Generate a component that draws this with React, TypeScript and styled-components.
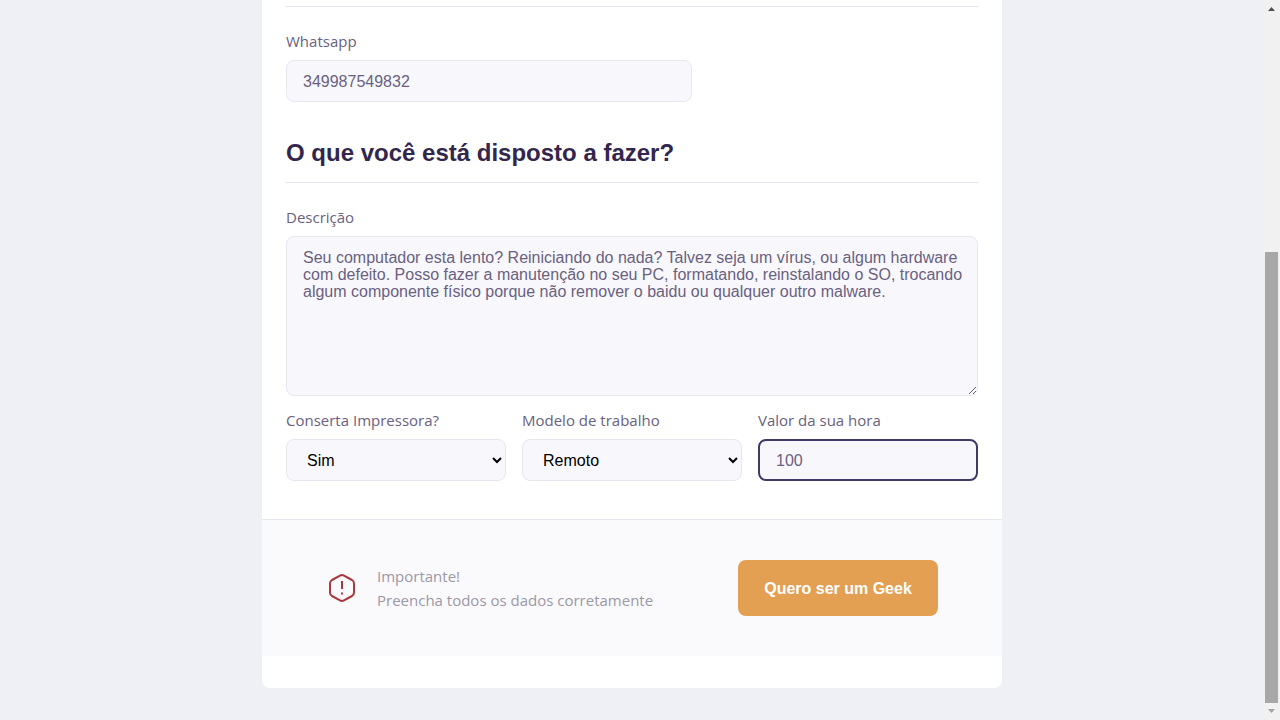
import React from 'react';
import styled, { createGlobalStyle, css } from 'styled-components';

const bodyFont = '"Open Sans", "Noto Sans", sans-serif';
const titleFont = '"Liberation Sans", Arial, sans-serif';

const GlobalStyle = createGlobalStyle`
  * { box-sizing: border-box; }
  body {
    margin: 0;
    background: #eff0f6;
    color: #6a6180;
    font-family: ${bodyFont};
  }
  input, select, textarea, button { font-family: ${titleFont}; }
`;

const Page = styled.div`
  display: flex;
  align-items: flex-start;
  min-height: 100vh;
`;

const Main = styled.main`
  flex: 1;
  min-width: 0;
  padding-bottom: 32px;
`;

const Card = styled.form`
  width: 100%;
  max-width: 740px;
  margin: 0 auto;
  padding-bottom: 32px;
  background: #ffffff;
  border-radius: 0 0 8px 8px;
`;

const Section = styled.section`
  padding: 0 24px;
`;

const SectionEdge = styled.div`
  height: 7px;
  margin-bottom: 22px;
  border-bottom: 1px solid #e6e6f0;
`;

const Title = styled.h2`
  margin: 35px 0 22px;
  padding-bottom: 13px;
  border-bottom: 1px solid #e6e6f0;
  color: #32264d;
  font: 700 24px/32px ${titleFont};
`;

const Row = styled.div<{ $columns: string; $top?: number }>`
  display: grid;
  grid-template-columns: ${({ $columns }) => $columns};
  gap: 16px;
  margin-top: ${({ $top = 0 }) => $top}px;
`;

const Field = styled.div`
  display: flex;
  flex-direction: column;
  gap: 7px;
  min-width: 0;
`;

const Label = styled.label`
  font-size: 15px;
  line-height: 24px;
`;

const control = css`
  width: 100%;
  border: 1px solid #e6e6f0;
  border-radius: 8px;
  background: #f8f8fc;
  font-size: 16px;
  outline: 0;
`;

const Input = styled.input<{ $active?: boolean }>`
  ${control}
  height: 42px;
  padding: 2px 16px 0;
  color: #6a6180;
  ${({ $active }) => $active && 'border: 2px solid #403a69;'}
`;

const TextArea = styled.textarea`
  ${control}
  display: block;
  height: 160px;
  min-height: 128px;
  padding: 12px 8px 12px 16px;
  color: #6a6180;
  line-height: 17px;
  resize: vertical;
`;

const Select = styled.select`
  ${control}
  height: 42px;
  padding: 0 0 0 16px;
  color: #000000;
`;

const Footer = styled.footer`
  display: flex;
  align-items: center;
  justify-content: space-between;
  margin-top: 38px;
  padding: 40px 64px;
  border-top: 1px solid #e6e6f0;
  background: #fafafc;
`;

const Notice = styled.p`
  display: flex;
  align-items: center;
  gap: 19px;
  margin: 0;
  color: #9c98a6;
  font-size: 15px;
  line-height: 24px;
`;

const SubmitButton = styled.button`
  width: 200px;
  height: 56px;
  padding: 2px 16px 0;
  border: 0;
  border-radius: 8px;
  background: #e39f52;
  color: #ffffff;
  font-size: 16px;
  font-weight: 700;
`;

const ScrollRail = styled.div`
  position: sticky;
  top: 0;
  display: flex;
  flex-direction: column;
  flex: 0 0 16px;
  height: 100vh;
  background: #f1f1f1;
`;

const ScrollArrow = styled.svg`
  display: block;
  width: 16px;
  height: 17px;
`;

const ScrollTrack = styled.div`
  display: flex;
  flex: 1;
  flex-direction: column;
  padding: 0 2px 0 1px;
`;

const ScrollSpace = styled.div`
  flex: 235;
`;

const ScrollThumb = styled.div`
  flex: 451;
  background: #a8a8a8;
`;

const WarningIcon = () => (
  <svg width="32" height="32" viewBox="0 0 32 32" fill="none" stroke="#a8383b" strokeWidth="2" strokeLinecap="butt" strokeLinejoin="round" aria-hidden="true">
    <path d="M14 3.6Q16 2.5 18 3.6L26 8Q28 9.200 28 11.500V20.500Q28 22.800 26 24L18 28.400Q16 29.500 14 28.400L6 24Q4 22.800 4 20.500V11.500Q4 9.200 6 8Z" />
    <path d="M16 9V17M16 20.500V22.500" />
  </svg>
);

const description =
  'Seu computador esta lento? Reiniciando do nada? Talvez seja um vírus, ou algum hardware com defeito. Posso fazer a manutenção no seu PC, formatando, reinstalando o SO, trocando algum componente físico porque não remover o baidu ou qualquer outro malware.';

export default function App() {
  return (
    <>
      <GlobalStyle />
      <Page>
        <Main>
          <Card onSubmit={(event) => event.preventDefault()}>
            <Section>
              <SectionEdge />
              <Row $columns="3fr 2fr">
                <Field>
                  <Label htmlFor="whatsapp">Whatsapp</Label>
                  <Input id="whatsapp" type="tel" defaultValue="349987549832" />
                </Field>
              </Row>
            </Section>

            <Section>
              <Title>O que você está disposto a fazer?</Title>
              <Field>
                <Label htmlFor="description">Descrição</Label>
                <TextArea id="description" defaultValue={description} spellCheck={false} />
              </Field>
              <Row $columns="repeat(3, 1fr)" $top={12}>
                <Field>
                  <Label htmlFor="printer">Conserta Impressora?</Label>
                  <Select id="printer" defaultValue="Sim">
                    <option>Sim</option>
                    <option>Não</option>
                  </Select>
                </Field>
                <Field>
                  <Label htmlFor="model">Modelo de trabalho</Label>
                  <Select id="model" defaultValue="Remoto">
                    <option>Remoto</option>
                    <option>Presencial</option>
                  </Select>
                </Field>
                <Field>
                  <Label htmlFor="cost">Valor da sua hora</Label>
                  <Input id="cost" inputMode="numeric" defaultValue="100" $active />
                </Field>
              </Row>
            </Section>

            <Footer>
              <Notice>
                <WarningIcon />
                <span>
                  Importante!
                  <br />
                  Preencha todos os dados corretamente
                </span>
              </Notice>
              <SubmitButton type="submit">Quero ser um Geek</SubmitButton>
            </Footer>
          </Card>
        </Main>
        <ScrollRail aria-hidden="true">
          <ScrollArrow viewBox="0 0 16 17">
            <path d="M4 11L7.500 7L11 11Z" fill="#505050" />
          </ScrollArrow>
          <ScrollTrack>
            <ScrollSpace />
            <ScrollThumb />
          </ScrollTrack>
          <ScrollArrow viewBox="0 0 16 17">
            <path d="M4 6L7.500 10L11 6Z" fill="#a3a3a3" />
          </ScrollArrow>
        </ScrollRail>
      </Page>
    </>
  );
}
